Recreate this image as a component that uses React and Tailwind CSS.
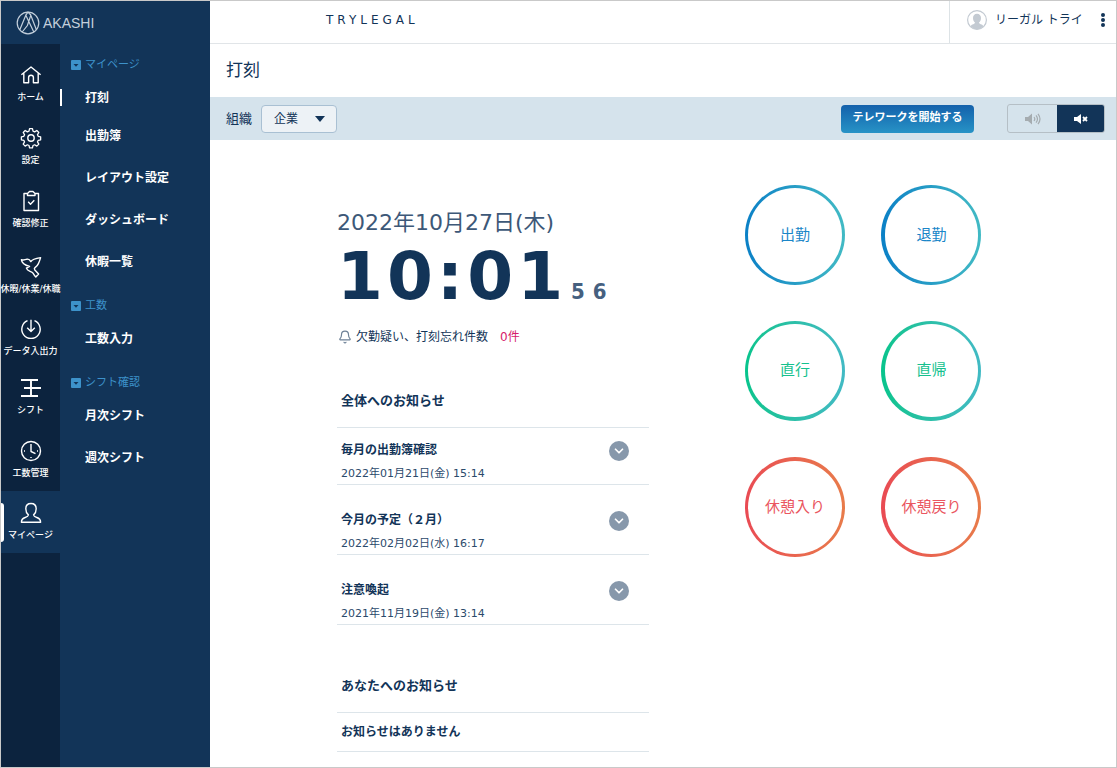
import React from "react";
import { Bell, ChevronDown } from "lucide-react";

// --- ICONS ---

const iconProps = {
  width: 22,
  height: 22,
  viewBox: "0 0 22 22",
  fill: "none",
  stroke: "currentColor",
  strokeWidth: 1.4,
  strokeLinejoin: "round",
  "aria-hidden": true,
};

const HomeIcon = () => (
  <svg {...iconProps}>
    <path d="M1.4 10.8 11 3l9.6 7.8M3.8 9.2v9.6h4.8v-5.4c0-1.4 1-2.2 2.4-2.2s2.4.8 2.4 2.2v5.4h4.8V9.2" />
  </svg>
);

const GearIcon = () => (
  <svg {...iconProps}>
    <path
      d="M9.4 1.4h3.2l.6 2.7 1.8.8 2.4-1.5 2.2 2.2-1.5 2.4.8 1.8 2.7.6v3.2l-2.7.6-.8 1.8 1.5 2.4-2.2 2.2-2.4-1.5-1.8.8-.6 2.7H9.4l-.6-2.7-1.8-.8-2.4 1.5-2.2-2.2L3.9 16l-.8-1.8-2.7-.6v-3.2l2.7-.6.8-1.8-1.5-2.4 2.2-2.2L7 4.9l1.8-.8z"
      transform="translate(1 .4) scale(.91)"
    />
    <circle cx="11" cy="11" r="3.2" />
  </svg>
);

const ClipboardIcon = () => (
  <svg {...iconProps}>
    <path d="M7.5 3.500H4v17h14.500v-17H15M7.500 5.500v-2l2-2H13l2 2v2zM8.200 11.800l2.300 2.400 3.800-4" />
  </svg>
);

const BirdIcon = () => (
  <svg {...iconProps}>
    <path d="M1.400 3.600c2 .8 4 .2 5.800-.4 1.600-.2 2.800.8 3.600 2.400 1.400-2.600 5.400-3.400 9.800-4-.6 2-1.200 4-2.200 6-.8 1.800-1.800 2.800-3.400 4-.8.800-.8 1.600-.2 2.400l3.800 4-2.800 3c-1.200-1-2-2.400-2.800-3.800-1.400-2.200-5.800-1.800-6.600-5l3.200-1.800C5.800 9.400 1.800 7.800 1.400 3.600z" />
  </svg>
);

const DownloadIcon = () => (
  <svg {...iconProps}>
    <path d="M7.500 2.700a9.200 9.200 0 1 0 7 0M11 1.800V13M7.200 9.800 11 13.400l3.800-3.600" />
  </svg>
);

const ShiftIcon = () => (
  <svg {...iconProps} strokeWidth={1.9}>
    <path d="M1 3h17M4 11h17M1 19h17M11 3v16" />
  </svg>
);

const ClockIcon = () => (
  <svg {...iconProps}>
    <circle cx="11" cy="11" r="9.500" />
    <path d="M11 4v7.500l4.500 2.200M4 11h1M17 11h1M11 17v1" />
  </svg>
);

const PersonIcon = () => (
  <svg {...iconProps}>
    <path d="M11 1.500c-3.200 0-5.200 2.200-5.200 5.200 0 2.600 1 4.800 2.600 6.200-.2 1.400-1.200 2-3.200 2.600-2.600.8-3.800 2-3.800 4.800h19.200c0-2.800-1.200-4-3.800-4.800-2-.6-3-1.200-3.200-2.600 1.600-1.400 2.600-3.600 2.600-6.200 0-3-2-5.200-5.200-5.200z" />
  </svg>
);

const LogoMark = () => (
  <svg width="24" height="24" viewBox="0 0 24 24" fill="none" stroke="currentColor" strokeWidth="1.200" aria-hidden="true">
    <circle cx="12" cy="12" r="10.800" />
    <path d="M3.800 18.800 9.800 4.200 17.800 21M6.200 21l5.200-6.500L14.800 4.200l5.600 14.600M9.800 4.200 12 1.200l2.800 3" />
  </svg>
);

const AvatarIcon = () => (
  <svg width="20" height="20" viewBox="0 0 20 20" aria-hidden="true">
    <circle cx="10" cy="10" r="9.400" fill="#fff" stroke="#c3cad2" strokeWidth="1.200" />
    <path
      d="M10 3.800c-2.500 0-4 1.700-4 4.100 0 2 .8 3.500 2 4.500-.2 1.300-1.300 1.600-2.600 2.100-.9.400-1.400.9-1.700 1.900a8.600 8.600 0 0 0 12.600 0c-.3-1-.8-1.500-1.700-1.900-1.300-.5-2.400-.8-2.600-2.100 1.200-1 2-2.500 2-4.500 0-2.400-1.500-4.100-4-4.100z"
      fill="#c3cad2"
    />
  </svg>
);

const SoundOnIcon = () => (
  <svg width="16" height="12" viewBox="0 0 16 12" aria-hidden="true">
    <path d="M0 4h3l4-3.500v11L3 8H0z" fill="currentColor" />
    <path d="M9 4q1.600 2 0 4M11 2.300q3 3.700 0 7.400M13 .8q4 5.200 0 10.400" fill="none" stroke="currentColor" strokeWidth="1.200" />
  </svg>
);

const SoundOffIcon = () => (
  <svg width="14" height="10" viewBox="0 0 14 10" aria-hidden="true">
    <path d="M0 3h3l4-3v10L3 7H0z" fill="currentColor" />
    <path d="m9 3 4 4M13 3 9 7" stroke="currentColor" strokeWidth="1.800" />
  </svg>
);

// --- DATA ---

const mainMenu = [
  { label: "ホーム", Icon: HomeIcon, height: "h-[63px]" },
  { label: "設定", Icon: GearIcon, height: "h-[63px]" },
  { label: "確認修正", Icon: ClipboardIcon, height: "h-[63px]" },
  { label: "休暇/休業/休職", Icon: BirdIcon, height: "h-[66px]" },
  { label: "データ入出力", Icon: DownloadIcon, height: "h-[62px]" },
  { label: "シフト", Icon: ShiftIcon, height: "h-[59px]" },
  { label: "工数管理", Icon: ClockIcon, height: "h-[63px]" },
  { label: "マイページ", Icon: PersonIcon, height: "h-[62px]", active: true },
];

const subMenu = [
  {
    title: "マイページ",
    items: ["打刻", "出勤簿", "レイアウト設定", "ダッシュボード", "休暇一覧"],
  },
  { title: "工数", items: ["工数入力"] },
  { title: "シフト確認", items: ["月次シフト", "週次シフト"] },
];

const notices = [
  { title: "毎月の出勤簿確認", date: "2022年01月21日(金) 15:14" },
  { title: "今月の予定（２月）", date: "2022年02月02日(水) 16:17" },
  { title: "注意喚起", date: "2021年11月19日(金) 13:14" },
];

const punches = [
  { label: "出勤", ring: "p-[3px] from-[#0a80c6] to-[#41bac4]", text: "text-[#1a86c8]" },
  { label: "退勤", ring: "p-[3px] pl-1 from-[#0a80c6] to-[#41bac4]", text: "text-[#1a86c8]" },
  { label: "直行", ring: "p-[3px] pb-1 from-[#06c48c] to-[#41bac4]", text: "text-[#14c18e]" },
  { label: "直帰", ring: "p-[3px] pb-1 pl-1 from-[#06c48c] to-[#41bac4]", text: "text-[#14c18e]" },
  { label: "休憩入り", ring: "p-[3px] pt-1 from-[#e94a53] to-[#e87b4a]", text: "text-[#ea5660]" },
  { label: "休憩戻り", ring: "p-[3px] pt-1 pl-1 from-[#e94a53] to-[#e87b4a]", text: "text-[#ea5660]" },
];

// --- COMPONENTS ---

function Sidebar() {
  return (
    <aside className="flex w-[209px] shrink-0 flex-col bg-[#123458] text-white">
      <a href="#" className="flex h-[43px] items-center gap-[3px] pl-[15px] text-[#c4d0dc]">
        <LogoMark />
        <span className="font-['Liberation_Sans'] text-sm">AKASHI</span>
      </a>
      <div className="flex flex-1">
        <nav className="w-[59px] shrink-0 bg-[#0c233e] pt-2">
          {mainMenu.map(({ label, Icon, height, active }) => (
            <a
              key={label}
              href="#"
              className={`relative flex flex-col items-center justify-end gap-[5px] pb-3 ${height} ${
                active ? "bg-[#123458]" : ""
              }`}
            >
              {active && <span className="absolute left-0 top-3 h-[39px] w-[3px] rounded-r-sm bg-white" />}
              <Icon />
              <span className="whitespace-nowrap text-[9px] font-medium leading-3">{label}</span>
            </a>
          ))}
        </nav>
        <nav className="flex flex-1 flex-col gap-[11px] pt-[9px]">
          {subMenu.map((group, g) => (
            <div key={group.title}>
              <h2 className="flex h-6 items-center gap-1 pl-[11px] text-[11px] text-[#3d92ca]">
                <svg width="10" height="10" viewBox="0 0 10 10" aria-hidden="true">
                  <rect width="10" height="10" rx="1" fill="#3d92ca" />
                  <path d="M2.500 4h5L5 6.800z" fill="#123458" />
                </svg>
                {group.title}
              </h2>
              {group.items.map((item, i) => {
                const active = g === 0 && i === 0;
                return (
                  <a
                    key={item}
                    href="#"
                    className={`relative flex items-center pl-[25px] text-xs font-bold ${
                      active ? "h-[38px] pt-1" : "h-[42px]"
                    }`}
                  >
                    {active && <span className="absolute left-0 top-3 h-[17px] w-0.5 bg-white" />}
                    {item}
                  </a>
                );
              })}
            </div>
          ))}
        </nav>
      </div>
    </aside>
  );
}

function Header() {
  return (
    <header className="flex h-[43px] border-b border-[#e1e5e8]">
      <div className="flex flex-1 items-center pb-1 pl-[116px] text-xs tracking-[4px]">TRYLEGAL</div>
      <div className="flex w-[167px] items-center border-l border-[#dde3e6] pb-1 pl-[17px] pr-2">
        <AvatarIcon />
        <span className="ml-2 flex-1 whitespace-nowrap text-xs">リーガル トライ</span>
        <button aria-label="メニュー" className="flex flex-col gap-px px-[3px]">
          <span className="size-1 rounded-full bg-[#123458]" />
          <span className="size-1 rounded-full bg-[#123458]" />
          <span className="size-1 rounded-full bg-[#123458]" />
        </button>
      </div>
    </header>
  );
}

function Toolbar() {
  return (
    <div className="flex h-[43px] items-center bg-[#d5e3ec] pl-4 pr-[11px]">
      <label htmlFor="org" className="text-[13px]">
        組織
      </label>
      <div className="relative ml-[9px]">
        <select
          id="org"
          className="h-7 w-[76px] appearance-none rounded-sm border border-[#a9c0d3] bg-[#edf2f6] pl-3 text-xs"
        >
          <option>企業</option>
        </select>
        <svg className="pointer-events-none absolute right-3 top-[11px]" width="10" height="6" viewBox="0 0 10 6" aria-hidden="true">
          <path d="M0 0h10L5 6z" fill="#123458" />
        </svg>
      </div>
      <button className="ml-auto h-7 w-[133px] rounded-sm bg-linear-to-b from-[#1561ab] to-[#2893c6] text-[11px] font-bold text-white">
        テレワークを開始する
      </button>
      <div className="ml-[33px] flex h-[29px] w-[98px] overflow-hidden rounded-[3px] border border-[#b5bfc6]">
        <button aria-label="音声オン" className="flex flex-1 items-center justify-center text-[#a5acb0]">
          <SoundOnIcon />
        </button>
        <button aria-label="音声オフ" className="flex w-[47px] items-center justify-center bg-[#123458] text-white">
          <SoundOffIcon />
        </button>
      </div>
    </div>
  );
}

function Notices() {
  return (
    <>
      <h2 className="mt-11 border-b border-[#dde5ea] pb-4 pl-1 text-[13px] font-bold leading-5">全体へのお知らせ</h2>
      <ul>
        {notices.map((n) => (
          <li
            key={n.date}
            className="flex items-start justify-between border-b border-[#dde5ea] pl-1 pr-5 pt-[25px] first:pt-3"
          >
            <div>
              <h3 className="text-xs font-bold leading-5">{n.title}</h3>
              <p className="mt-1 text-[11px] leading-5 text-[#2b4a6b]">{n.date}</p>
            </div>
            <button
              aria-label={n.title}
              className="mt-px flex size-5 items-center justify-center rounded-full bg-[#8798ab] text-white"
            >
              <ChevronDown size={14} strokeWidth={3} />
            </button>
          </li>
        ))}
      </ul>
      <h2 className="mt-[51px] border-b border-[#dde5ea] pb-4 pl-1 text-[13px] font-bold leading-5">あなたへのお知らせ</h2>
      <p className="border-b border-[#dde5ea] py-[9px] pl-1 text-xs font-bold leading-5">お知らせはありません</p>
    </>
  );
}

export default function App() {
  return (
    <div
      lang="ja"
      className="flex min-h-screen border border-[#c9c9c9] bg-white font-['DejaVu_Sans','Noto_Sans_CJK_JP',sans-serif] text-[#123458]"
    >
      <Sidebar />
      <div className="min-w-0 flex-1">
        <Header />
        <h1 className="flex h-[53px] items-center pl-4 text-[17px]">打刻</h1>
        <Toolbar />

        <main className="flex items-start justify-center gap-24 pr-2">
          <section className="w-[312px] pt-[67px]">
            <p className="whitespace-nowrap text-[22px] leading-8 text-[#3d5878]">2022年10月27日(木)</p>
            <div className="flex items-baseline">
              <span className="text-[66px] font-bold leading-[76px] tracking-[4px]">10:01</span>
              <span className="ml-1 font-['DejaVu_Sans_Condensed'] text-[22px] font-bold tracking-[8px] text-[#46607f]">56</span>
            </div>
            <p className="mt-3 flex items-center gap-1 pl-px text-xs leading-5">
              <Bell size={14} className="text-[#6d8096]" />
              欠勤疑い、打刻忘れ件数
              <span className="ml-2 text-[#d6206b]">0件</span>
            </p>
            <Notices />
          </section>

          <section className="grid grid-cols-2 gap-9 pt-[45px]">
            {punches.map((p) => (
              <button key={p.label} className={`size-[100px] rounded-full bg-linear-to-r ${p.ring}`}>
                <span
                  className={`flex size-full items-center justify-center rounded-full bg-white text-[15px] ${p.text}`}
                >
                  {p.label}
                </span>
              </button>
            ))}
          </section>
        </main>
      </div>
    </div>
  );
}
